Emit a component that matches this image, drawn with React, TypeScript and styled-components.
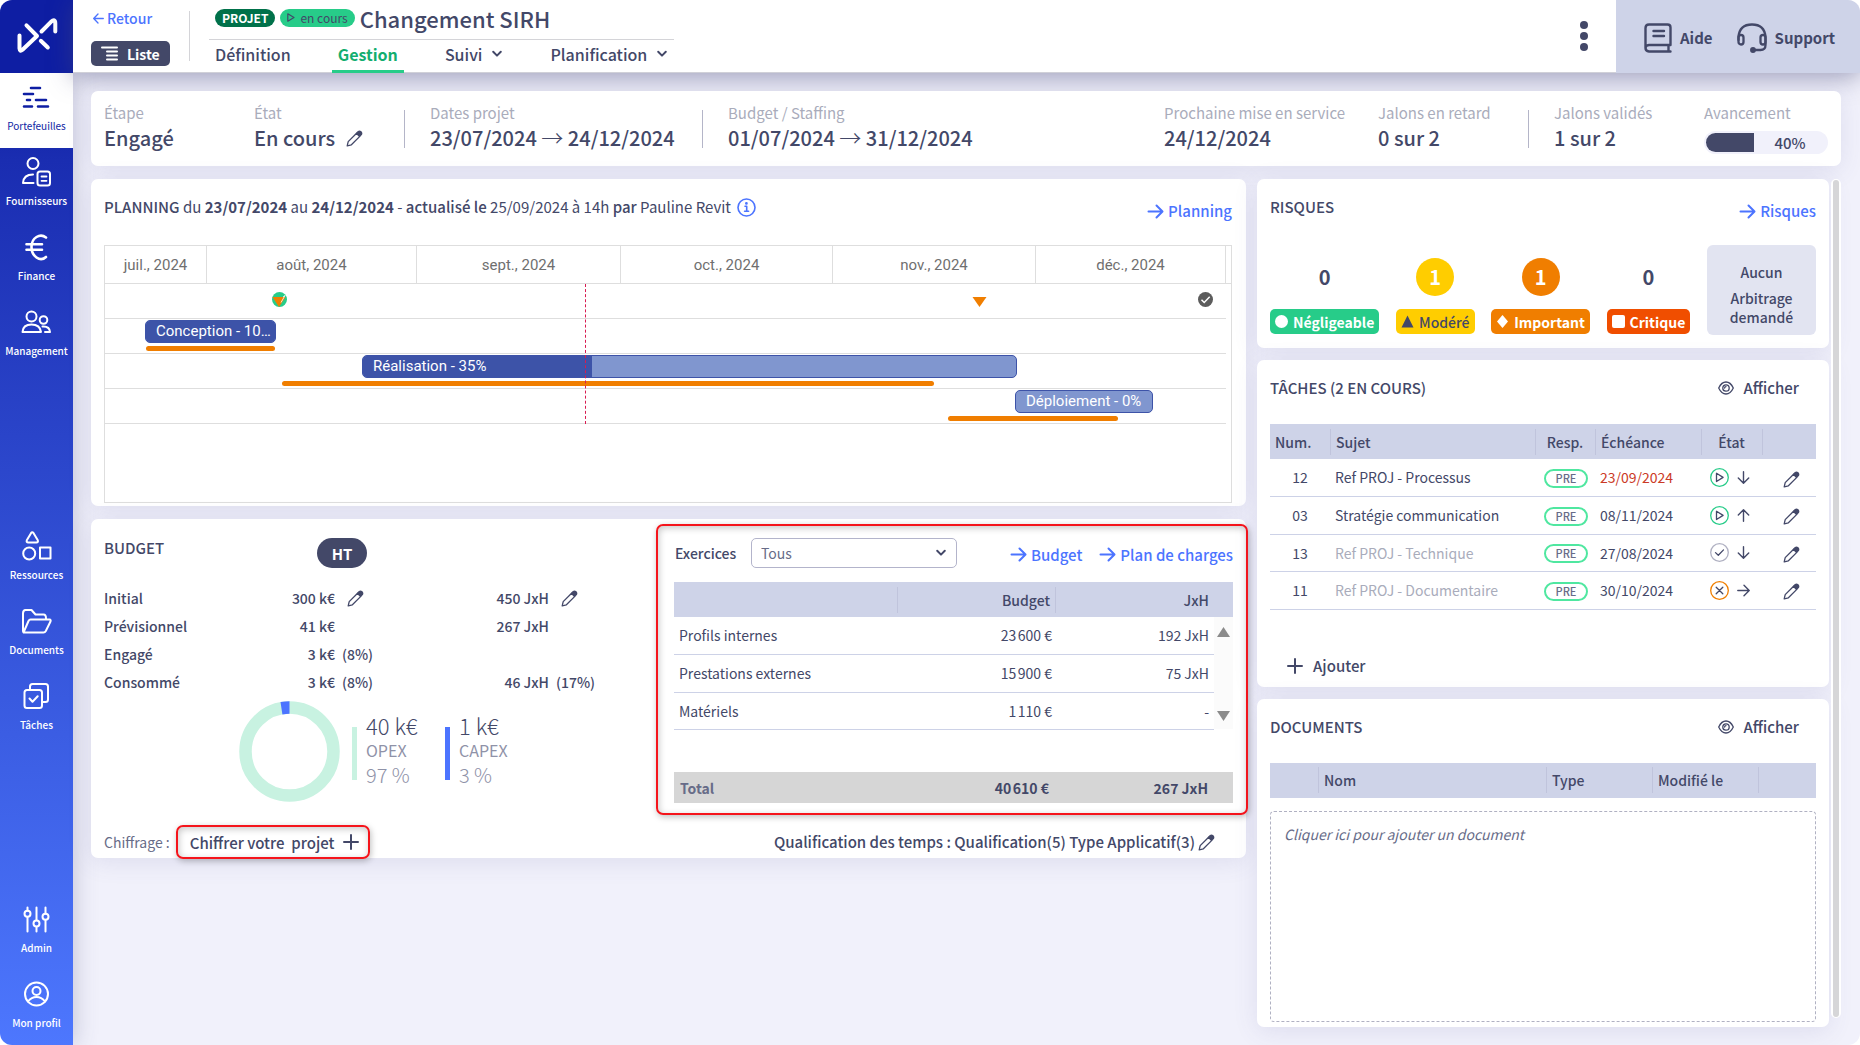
import React from "react";
import styled, { createGlobalStyle, css } from "styled-components";

const c = {
  ink: "#434868",
  soft: "#676c88",
  muted: "#a9acbb",
  blue: "#4c74ff",
  navy: "#0e1ea3",
  green: "#27cc89",
  line: "#cdd2e7",
  head: "#ced3e8",
  orange: "#f07e00",
};

const Global = createGlobalStyle`
  *, *::before, *::after { box-sizing: border-box; }
  body { margin: 0; background: #fff; }
  body, button, select, table { font-family: "Noto Sans CJK SC", "Open Sans", sans-serif; }
  button { border: 0; padding: 0; background: none; color: inherit; cursor: pointer; }
  a { text-decoration: none; color: inherit; }
  svg { display: block; flex: none; }
  h1, h2, p, dl, dd, dt, ul { margin: 0; padding: 0; }
`;

const Page = styled.div`
  display: flex;
  min-height: 100vh;
  border-radius: 12px;
  overflow: hidden;
  background: #f1f1fb;
  color: ${c.ink};
  font-size: 14px;
  line-height: 20px;
`;

/* ---------- sidebar ---------- */
const Sidebar = styled.nav`
  width: 73px;
  flex: none;
  display: flex;
  flex-direction: column;
  justify-content: space-between;
  background: linear-gradient(${c.navy} 0, ${c.navy} 73px, #1a2db1 160px, #4d77fe 100%);
  box-shadow: 0 0 24px rgba(70, 72, 120, 0.3);
`;
const LogoBox = styled.a`
  display: block;
  height: 73px;
`;
const NavItem = styled.a<{ $active?: boolean }>`
  height: 75px;
  display: flex;
  flex-direction: column;
  align-items: center;
  padding-top: 8px;
  gap: 4px;
  font-size: 10px;
  line-height: 16px;
  font-weight: 500;
  white-space: nowrap;
  color: #fff;
  ${(p) => p.$active && css`background: #fff; color: ${c.navy}; font-weight: 400;`}
`;

/* ---------- header ---------- */
const Main = styled.div`
  flex: 1;
  min-width: 0;
  display: flex;
  flex-direction: column;
`;
const Header = styled.header`
  height: 73px;
  display: flex;
  background: #fff;
  border-bottom: 1px solid #d0d0d8;
  box-shadow: 0 4px 24px rgba(70, 72, 120, 0.5);
`;
const BackCol = styled.div`
  width: 117px;
  padding: 8px 0 0 18px;
  display: flex;
  flex-direction: column;
  align-items: flex-start;
  gap: 13px;
`;
const Back = styled.a`
  display: flex;
  align-items: center;
  gap: 3px;
  color: ${c.blue};
  font-weight: 500;
  padding-left: 2px;
`;
const ListButton = styled.button`
  height: 25px;
  width: 79px;
  display: flex;
  align-items: center;
  gap: 8px;
  padding-left: 10px;
  border-radius: 5px;
  background: ${c.ink};
  color: #fff;
  font-size: 14px;
  font-weight: 700;
`;
const TitleCol = styled.div`
  padding-left: 20px;
  position: relative;
  margin-left: -1px;
  &::before {
    content: "";
    position: absolute;
    left: 0;
    top: 11px;
    height: 50px;
    border-left: 1px solid #d4d4d8;
  }
`;
const TitleRow = styled.div`
  height: 40px;
  display: flex;
  align-items: center;
  padding: 0 6px 4px;
  gap: 5px;
  border-bottom: 1px solid #d4d4d8;
`;
const Pill = styled.span<{ $dark?: boolean }>`
  height: 18px;
  display: flex;
  align-items: center;
  gap: 5px;
  padding: 0 7px;
  border-radius: 9px;
  font-size: 12px;
  line-height: 18px;
  background: ${(p) => (p.$dark ? "#00714a" : c.green)};
  color: ${(p) => (p.$dark ? "#fff" : c.ink)};
  font-weight: ${(p) => (p.$dark ? 700 : 400)};
`;
const Title = styled.h1`
  font-size: 22px;
  line-height: 34px;
  font-weight: 500;
`;
const Tabs = styled.div`
  display: flex;
  height: 33px;
  gap: 35px;
`;
const Tab = styled.a<{ $active?: boolean }>`
  display: flex;
  align-items: center;
  gap: 9px;
  padding: 0 6px 2px;
  font-size: 16px;
  font-weight: 500;
  border-bottom: 3px solid transparent;
  ${(p) => p.$active && css`color: #13ae6f; font-weight: 700; border-bottom-color: ${c.green};`}
`;
const MenuButton = styled.button`
  margin-left: auto;
  width: 64px;
  display: flex;
  justify-content: center;
  align-items: center;
`;
const HelpArea = styled.div`
  width: 244px;
  display: flex;
  align-items: center;
  gap: 24px;
  margin-bottom: -1px;
  padding: 3px 0 0 28px;
  background: ${c.head};
`;
const HelpLink = styled.a`
  display: flex;
  align-items: center;
  gap: 8px;
  font-size: 15px;
  font-weight: 700;
`;

/* ---------- content ---------- */
const Content = styled.main`
  flex: 1;
  padding: 18px 19px 18px 18px;
  display: flex;
  flex-direction: column;
  gap: 13px;
`;
const Card = styled.section`
  background: #fff;
  border-radius: 7px;
  box-shadow: 0 4px 24px rgba(80, 80, 150, 0.12);
`;
const InfoCard = styled(Card)`
  height: 75px;
  display: flex;
  padding: 12px 13px 0;
`;
const Info = styled.dl<{ $w: number }>`
  width: ${(p) => p.$w}px;
  white-space: nowrap;
  dt { font-size: 15px; line-height: 20px; color: ${c.muted}; }
  dd { font-size: 20px; line-height: 30px; font-weight: 500; display: flex; align-items: center; gap: 11px; }
`;
const Range = styled.span`
  i { font-style: normal; font-weight: 300; font-size: 22px; line-height: 20px; }
`;
const InfoRule = styled.div`
  width: 1px;
  height: 38px;
  margin: 7px 25px 0 0;
  background: #b4b5c8;
`;
const Grow = styled.div`
  flex: 1;
`;
const Progress = styled.div`
  width: 124px;
  flex: none;
  height: 23px;
  margin-top: 8px;
  padding: 2px;
  display: flex;
  align-items: center;
  border-radius: 12px;
  background: #f1f1fb;
  font-size: 15px;
  line-height: 19px;
  font-weight: 500;
`;
const ProgressFill = styled.div`
  height: 19px;
  border-radius: 10px 0 0 10px;
  background: ${c.ink};
`;
const ProgressText = styled.span`
  flex: 1;
  text-align: center;
`;
const Columns = styled.div`
  flex: 1;
  display: flex;
  align-items: stretch;
`;
const LeftCol = styled.div`
  flex: 1;
  min-width: 0;
  display: flex;
  flex-direction: column;
  gap: 13px;
  margin-right: 11px;
`;
const RightCol = styled.div`
  width: 33%;
  max-width: 572px;
  min-width: 560px;
  display: flex;
  flex-direction: column;
  gap: 12px;
`;
const ScrollTrack = styled.div`
  width: 10px;
  margin: 0 0 9px 2px;
  padding: 1px 2px;
  border-radius: 5px;
  background: #fff;
  &::before {
    content: "";
    display: block;
    height: 100%;
    border-radius: 3px;
    background: #d6d6d8;
  }
`;
const CardHead = styled.div<{ $tall?: boolean }>`
  display: flex;
  justify-content: space-between;
  align-items: flex-start;
  height: ${(p) => (p.$tall ? 24 : 20)}px;
  > a { align-self: flex-end; }
`;
const CardTitle = styled.h2`
  font-size: 15px;
  line-height: 20px;
  font-weight: 500;
`;
const ArrowAnchor = styled.a`
  display: flex;
  align-items: center;
  gap: 4px;
  color: ${c.blue};
  font-size: 15px;
  font-weight: 500;
`;

/* ---------- planning ---------- */
const PlanningCard = styled(Card)`
  padding: 18px 14px 3px 13px;
`;
const PlanningTitle = styled.p`
  display: flex;
  align-items: center;
  gap: 6px;
  font-size: 15px;
  b { font-weight: 700; }
  strong { font-weight: 500; }
`;
const Chart = styled.div`
  margin-top: 24px;
  border: 1px solid #dedede;
  font-family: Roboto, sans-serif;
  font-size: 15px;
  padding-bottom: 78px;
`;
const ChartHead = styled.div`
  height: 38px;
  padding-right: 5px;
  display: grid;
  grid-template-columns: 102fr 210fr 204fr 212fr 203fr 190fr;
  border-bottom: 1px solid #dedede;
`;
const Month = styled.div`
  display: flex;
  align-items: center;
  justify-content: center;
  color: #6f6f6f;
  border-right: 1px solid #dedede;
`;
const ChartBody = styled.div`
  position: relative;
  margin-right: 5px;
`;
const Lane = styled.div`
  height: 35px;
  position: relative;
  border-bottom: 1px solid #dedede;
`;
const Bar = styled.div`
  position: absolute;
  top: 1px;
  height: 23px;
  overflow: hidden;
  border: 1px solid #3d53a8;
  border-radius: 5px;
  background: #8096cf;
`;
const BarDone = styled.div`
  position: absolute;
  inset: 0 auto 0 0;
  background: #3d53a8;
`;
const BarLabel = styled.div`
  position: relative;
  padding-left: 10px;
  line-height: 21px;
  color: #fff;
  white-space: nowrap;
`;
const Baseline = styled.div`
  position: absolute;
  top: 27px;
  height: 5px;
  border-radius: 3px;
  background: ${c.orange};
`;
const Milestone = styled.div`
  position: absolute;
  top: 8px;
  margin-left: -8px;
`;
const Today = styled.div`
  position: absolute;
  top: 0;
  bottom: 0;
  border-left: 1px dashed #d81b50;
`;

/* ---------- budget ---------- */
const BudgetCard = styled(Card)`
  padding: 5px 13px 0;
`;
const BudgetTop = styled.div`
  display: flex;
`;
const BudgetLeft = styled.div`
  flex: 1;
  min-width: 0;
  padding-top: 14px;
`;
const BudgetHead = styled.div`
  display: flex;
  align-items: flex-start;
  height: 46px;
  h2 { width: 213px; }
`;
const HtButton = styled.button`
  width: 50px;
  height: 30px;
  border-radius: 15px;
  background: ${c.ink};
  color: #fff;
  font-size: 15px;
  font-weight: 700;
`;
const Figures = styled.table`
  border-collapse: collapse;
  table-layout: fixed;
  font-size: 14px;
  line-height: 20px;
  font-weight: 500;
  th { text-align: left; font-weight: 500; padding: 0; width: 140px; }
  tr { height: 28px; }
  td { padding: 0; }
`;
const Num = styled.td<{ $w: number }>`
  width: ${(p) => p.$w}px;
  text-align: right;
`;
const Side = styled.td`
  width: 70px;
  && { padding-left: 7px; }
  button { display: block; margin-left: 5px; }
`;
const Split = styled.div`
  display: flex;
  align-items: flex-start;
  margin: 5px 0 0 135px;
`;
const Legend = styled.div<{ $color: string }>`
  position: relative;
  width: 93px;
  padding: 9px 0 0 14px;
  font-size: 16px;
  line-height: 20px;
  color: #8f92a8;
  &::before {
    content: "";
    position: absolute;
    left: 0;
    top: 26px;
    width: 5px;
    height: 53px;
    background: ${(p) => p.$color};
  }
  strong { display: block; font-size: 22px; line-height: 30px; font-weight: 300; color: ${c.ink}; }
  span { display: block; }
  em { display: block; font-style: normal; font-size: 20px; line-height: 30px; font-weight: 300; }
`;
const redFrame = css`
  border: 2px solid #f5141b;
  border-radius: 7px;
  box-shadow: 1px 2px 6px rgba(0, 0, 0, 0.25), inset 1px 2px 7px rgba(0, 0, 0, 0.22);
`;
const Exercises = styled.div`
  ${redFrame}
  width: 592px;
  margin-right: -15px;
  padding: 12px 13px 10px 16px;
`;
const ExercisesHead = styled.div`
  display: flex;
  align-items: center;
  height: 30px;
  margin-bottom: 14px;
  font-weight: 500;
  label { width: 77px; padding-left: 1px; }
`;
const SelectWrap = styled.div`
  width: 206px;
  margin-right: auto;
  display: grid;
  align-items: center;
  svg, select { grid-area: 1 / 1; }
  svg { justify-self: end; margin-right: 10px; pointer-events: none; }
`;
const Select = styled.select`
  height: 30px;
  width: 100%;
  appearance: none;
  padding: 0 9px;
  border: 1px solid #b3b4cb;
  border-radius: 5px;
  background: #fff;
  color: ${c.soft};
  font-size: 14px;
`;
const Links = styled.div`
  display: flex;
  gap: 17px;
  padding-top: 3px;
`;
const headCell = css`
  height: 35px;
  background: ${c.head};
  font-weight: 500;
  font-size: 14px;
  text-align: left;
`;
const ruled = css`
  background-image: linear-gradient(#c0c4dc, #c0c4dc);
  background-size: 1px 26px;
  background-repeat: no-repeat;
  background-position: left center;
`;
const DataTable = styled.table`
  width: 100%;
  border-collapse: collapse;
  table-layout: fixed;
  font-size: 14px;
  line-height: 20px;
`;
const Th = styled.th<{ $w?: number; $align?: string; $rule?: boolean; $pad?: string }>`
  ${headCell}
  width: ${(p) => (p.$w ? `${p.$w}px` : "auto")};
  padding: ${(p) => p.$pad || "0 5px"};
  && { text-align: ${(p) => p.$align || "left"}; }
  ${(p) => p.$rule && ruled}
`;
const Td = styled.td<{ $align?: string; $pad?: string; $tone?: string }>`
  height: 37px;
  tr:nth-child(even) > & { height: 38px; }
  padding: ${(p) => p.$pad || "0 5px"};
  text-align: ${(p) => p.$align || "left"};
  color: ${(p) => p.$tone || "inherit"};
  border-bottom: 1px solid ${c.line};
  white-space: nowrap;
`;
const Gutter = styled.td`
  padding: 10px 0 8px;
  background: #fbfbfb;
`;
const GutterInner = styled.div`
  height: 94px;
  display: flex;
  flex-direction: column;
  justify-content: space-between;
  align-items: center;
`;
const Spacer = styled.td`
  height: 43px;
  padding: 0;
`;
const TotalCell = styled.td<{ $align?: string; $soft?: boolean }>`
  height: 31px;
  padding: 0 6px;
  background: #d6d6d6;
  font-weight: 700;
  text-align: ${(p) => p.$align || "left"};
  color: ${(p) => (p.$soft ? c.soft : c.ink)};
`;
const BudgetFoot = styled.div`
  display: flex;
  align-items: center;
  margin: 10px 0 -1px;
  color: ${c.soft};
`;
const EstimateButton = styled.button`
  ${redFrame}
  height: 34px;
  margin-left: 6px;
  padding: 0 9px 0 12px;
  display: flex;
  align-items: center;
  gap: 8px;
  font-size: 15px;
  font-weight: 500;
  color: ${c.ink};
  white-space: pre;
`;
const Qualif = styled.div`
  margin: 0 18px 0 auto;
  display: flex;
  align-items: center;
  gap: 3px;
  font-size: 15px;
  font-weight: 500;
  color: ${c.ink};
`;

/* ---------- right column ---------- */
const SideCard = styled(Card)`
  padding: 18px 13px 13px;
`;
const RiskRow = styled.div`
  display: flex;
  align-items: flex-end;
  justify-content: space-between;
  margin-top: 24px;
`;
const Risk = styled.div`
  display: flex;
  flex-direction: column;
  align-items: center;
  gap: 13px;
  padding-bottom: 1px;
`;
const RiskCount = styled.div<{ $bg?: string }>`
  width: 38px;
  height: 38px;
  border-radius: 50%;
  background: ${(p) => p.$bg || "none"};
  color: ${(p) => (p.$bg ? "#fff" : "inherit")};
  display: grid;
  place-items: center;
  font-size: 20px;
  font-weight: 700;
`;
const RiskTag = styled.div<{ $bg: string; $dark?: boolean }>`
  height: 25px;
  padding: 0 5px;
  display: flex;
  align-items: center;
  gap: 5px;
  border-radius: 5px;
  background: ${(p) => p.$bg};
  color: ${(p) => (p.$dark ? c.ink : "#fff")};
  font-size: 14px;
  font-weight: ${(p) => (p.$dark ? 500 : 700)};
`;
const Arbitrage = styled.div`
  width: 109px;
  height: 90px;
  border-radius: 6px;
  background: #e2e4f1;
  padding-top: 18px;
  text-align: center;
  font-weight: 500;
  line-height: 19px;
  p + p { margin-top: 7px; }
`;
const ShowButton = styled.button`
  display: flex;
  align-items: center;
  gap: 10px;
  margin-right: 17px;
  font-size: 15px;
  line-height: 20px;
  font-weight: 500;
`;
const TableWrap = styled.div`
  margin-top: 26px;
`;
const Resp = styled.span`
  display: inline-block;
  width: 44px;
  height: 19px;
  border: 2px solid #4fe7a0;
  border-radius: 10px;
  font-size: 11px;
  line-height: 15px;
  font-weight: 500;
  text-align: center;
  vertical-align: middle;
  color: ${c.soft};
`;
const StateCell = styled.span`
  display: flex;
  align-items: center;
  gap: 8px;
`;
const AddButton = styled.button`
  display: flex;
  align-items: center;
  gap: 10px;
  margin: 46px 0 0 17px;
  font-size: 15px;
  line-height: 20px;
  font-weight: 500;
`;
const TasksCard = styled(SideCard)`
  padding-bottom: 11px;
`;
const DocsCard = styled(SideCard)`
  flex: 1;
  display: flex;
  flex-direction: column;
  padding-bottom: 5px;
`;
const DropZone = styled.button`
  flex: 1;
  min-height: 160px;
  margin-top: 13px;
  padding: 12px 13px;
  display: flex;
  align-items: flex-start;
  border: 1px dashed #b0b1c2;
  border-radius: 4px;
  font-size: 14px;
  line-height: 20px;
  font-style: italic;
  color: ${c.soft};
`;
const IconButton = styled.button`
  display: inline-block;
  vertical-align: middle;
`;

/* ---------- icons ---------- */
const stroke = {
  fill: "none",
  stroke: "currentColor",
  strokeLinecap: "round" as const,
  strokeLinejoin: "round" as const,
};
const Pencil = () => (
  <svg width="17" height="17" viewBox="0 0 17 17" {...stroke} strokeWidth="1.3">
    <path d="M1.2 15.8 2.2 11.6 10.6 3.2l3.2 3.2-8.4 8.4z" />
    <path d="M10.4 3.4 12.3 1.5q1.3-1 2.6.3t.5 2.7l-1.9 1.9z" fill="currentColor" />
  </svg>
);
const ArrowRight = () => (
  <svg width="17" height="17" viewBox="0 0 17 17" {...stroke} strokeWidth="2">
    <path d="M1.5 8.5H15M9.5 2.5l6 6-6 6" />
  </svg>
);
const StateArrow = ({ dir }: { dir: string }) => {
  const turn: Record<string, number> = { right: 0, down: 90, up: 270 };
  return (
    <svg width="13" height="13" viewBox="0 0 13 13" {...stroke} strokeWidth="1.4">
      <g transform={`rotate(${turn[dir]} 6.5 6.5)`}>
        <path d="M.8 6.5h11.2M7 1.3l5.2 5.2L7 11.7" />
      </g>
    </svg>
  );
};
const StateIcon = ({ kind }: { kind: string }) => {
  const ring: Record<string, string> = { play: c.green, done: "#b0b1c2", off: c.orange };
  return (
    <svg width="19" height="19" viewBox="0 0 19 19" {...stroke} strokeWidth="1.3">
      <circle cx="9.5" cy="9.5" r="8.8" stroke={ring[kind]} />
      {kind === "play" && <path d="M6.5 5.3v8.2l6.6-4.1z" />}
      {kind === "done" && <path d="m5.5 9.6 2.8 2.7 5.2-5.4" />}
      {kind === "off" && <path d="m6.2 6.2 6.6 6.6M12.8 6.2l-6.6 6.6" />}
    </svg>
  );
};
const Chevron = () => (
  <svg width="12" height="8" viewBox="0 0 12 8" {...stroke} strokeWidth="2">
    <path d="m2.2 1.8 3.8 3.8 3.8-3.8" />
  </svg>
);
const Eye = () => (
  <svg width="16" height="14" viewBox="0 0 16 14" {...stroke} strokeWidth="1.3">
    <path d="M.7 7Q3.5 1 8 1t7.300 6Q12.500 13 8 13T.7 7z" />
    <circle cx="8" cy="7" r="3.2" />
    <path d="M8 5.600Q6.600 5.700 6.600 7" />
  </svg>
);
const Plus = () => (
  <svg width="16" height="16" viewBox="0 0 16 16" {...stroke} strokeWidth="2">
    <path d="M8 1v14M1 8h14" />
  </svg>
);
const InfoIcon = () => (
  <svg width="19" height="19" viewBox="0 0 19 19" {...stroke} stroke={c.blue} strokeWidth="1.6">
    <circle cx="9.5" cy="9.5" r="8.5" />
    <path d="M8 8.3h1.700v5M7.600 13.300h4" />
    <circle cx="9.4" cy="5.4" r=".6" fill={c.blue} />
  </svg>
);
const Tri = ({ up }: { up?: boolean }) => (
  <svg width="13" height="10" viewBox="0 0 13 10">
    <path d={up ? "M6.500 0 13 10H0z" : "M0 0h13L6.500 10z"} fill="#8b8b8b" />
  </svg>
);

const Logo = () => (
  <svg width="73" height="73" viewBox="0 0 73 73" {...stroke} stroke="#fff" strokeWidth="4">
    <path d="M19.500 35.500v13q.2 3.700 3 1.300L37 36 26.500 25.300" />
    <path d="M41.500 31.500 51 21.800q4.300-3.600 4.300 1.700v8" />
    <path d="m40.800 40.800 7 6.700" />
  </svg>
);

const navIcons: Record<string, React.ReactNode> = {
  Portefeuilles: <path d="M12 7h9M5 13h9M8 19h3M17 19h10M5 25.500h8M19 25.500h10" strokeWidth="2.600" />,
  Fournisseurs: (
    <>
      <circle cx="14" cy="7.500" r="5.500" />
      <path d="M14 18.500q-9.500 0-10 8.500h10.500" />
      <rect x="18.500" y="15.500" width="12.500" height="14" rx="2.500" />
      <path d="M22.500 20.500h5M22.500 24.800h5" strokeWidth="1.800" />
    </>
  ),
  Finance: <path d="M27 6.500Q22.500 3 17.500 6T12.500 16t5 10.500 9.500-.5M7.500 13.200H23M7.500 18.800H23" strokeWidth="2.600" />,
  Management: (
    <>
      <circle cx="12.500" cy="10.500" r="5" />
      <path d="M3.500 26q.5-7.500 9-7.500t9.500 7.500z" />
      <circle cx="24.500" cy="14" r="3.800" />
      <path d="M23.500 20.500q7-.5 7.500 5.500h-5" />
    </>
  ),
  Ressources: (
    <>
      <path d="M12 3.200q1.200-1.700 2.600 0l4.200 7q.7 2.200-1.500 2.300H9.300q-2.200-.1-1.500-2.300z" />
      <circle cx="10.200" cy="23.500" r="6" />
      <path d="M21 17.500h10.500v11H21z" />
    </>
  ),
  Documents: (
    <path d="M4 26V8.500Q4 5 6.500 5h6l4 4.500h8q2.500 0 2.500 4M4.500 27.500l5-11.500q.8-1.500 2-1.500h19q1.700.2 1 2L26.800 26q-.8 1.500-2.300 1.500H6Q4 27.500 4 26" />
  ),
  "Tâches": (
    <>
      <rect x="5.500" y="10" width="17.500" height="18" rx="2.500" />
      <path d="M11 9.500V6.500Q11 4 13.500 4h13Q29 4 29 6.500v13q0 2.500-2.500 2.500h-3M10.500 18.500l3 3.200 5.200-5.400" />
    </>
  ),
  Admin: (
    <>
      <path d="M8.500 4.500v3M8.500 14v14.500M17.500 4.500v12.500M17.500 24v4.500M26.500 4.500v6M26.500 17v11.500" />
      <circle cx="8.500" cy="10.700" r="3" />
      <circle cx="17.500" cy="20.500" r="3" />
      <circle cx="26.500" cy="13.700" r="3" />
    </>
  ),
  "Mon profil": (
    <>
      <circle cx="17.500" cy="16" r="11.500" />
      <circle cx="17.500" cy="13" r="4" />
      <path d="M9 23.500q3.500-4.500 8.500-4.500t8.500 4.500" />
    </>
  ),
};
const NavEntry = ({ name, active }: { name: string; active?: boolean }) => (
  <NavItem href="#" $active={active}>
    <svg width="35" height="33" viewBox="0 0 35 33" {...stroke} strokeWidth="2">
      {navIcons[name]}
    </svg>
    {name}
  </NavItem>
);

/* ---------- data ---------- */
const SPAN = 1121;
const pct = (n: number) => `${(n / SPAN) * 100}%`;
const months = ["juil., 2024", "août, 2024", "sept., 2024", "oct., 2024", "nov., 2024", "déc., 2024"];
const phases = [
  { label: "Conception - 10…", from: 40, to: 171, done: 100, base: [41, 170] },
  { label: "Réalisation - 35%", from: 257, to: 912, done: 35, base: [177, 829] },
  { label: "Déploiement - 0%", from: 910, to: 1048, done: 0, base: [843, 1013] },
];
const tasks = [
  { n: "12", s: "Ref PROJ - Processus", d: "23/09/2024", late: true, k: "play", a: "down" },
  { n: "03", s: "Stratégie communication", d: "08/11/2024", k: "play", a: "up" },
  { n: "13", s: "Ref PROJ - Technique", d: "27/08/2024", k: "done", a: "down", off: true },
  { n: "11", s: "Ref PROJ - Documentaire", d: "30/10/2024", k: "off", a: "right", off: true },
];
const exercises = [
  ["Profils internes", "23\u202f600 €", "192 JxH"],
  ["Prestations externes", "15\u202f900 €", "75 JxH"],
  ["Matériels", "1\u202f110 €", "-"],
];
const risks = [
  { name: "Négligeable", n: 0, bg: c.green, shape: <circle cx="6.500" cy="6.500" r="6.500" /> },
  { name: "Modéré", n: 1, bg: "#ffcd00", dark: true, shape: <path d="M6.500 .5 12.500 12.500H.5z" /> },
  { name: "Important", n: 1, bg: c.orange, shape: <path d="M6.500 0 12 6.500 6.500 13 1 6.500z" /> },
  { name: "Critique", n: 0, bg: "#f04e00", shape: <rect width="13" height="13" rx="2" /> },
];

export default function App() {
  return (
    <>
      <Global />
      <Page>
        <Sidebar>
          <div>
            <LogoBox href="#" aria-label="Accueil"><Logo /></LogoBox>
            <NavEntry name="Portefeuilles" active />
            <NavEntry name="Fournisseurs" />
            <NavEntry name="Finance" />
            <NavEntry name="Management" />
          </div>
          <div>
            <NavEntry name="Ressources" />
            <NavEntry name="Documents" />
            <NavEntry name="Tâches" />
          </div>
          <div>
            <NavEntry name="Admin" />
            <NavEntry name="Mon profil" />
          </div>
        </Sidebar>
        <Main>
          <Header>
            <BackCol>
              <Back href="#">
                <svg width="11" height="11" viewBox="0 0 11 11" {...stroke} strokeWidth="1.300">
                  <path d="M10.300 5.500H.8M5 1 .7 5.500 5 10" />
                </svg>
                Retour
              </Back>
              <ListButton>
                <svg width="18" height="15" viewBox="0 0 18 15" {...stroke} strokeWidth="2">
                  <path d="M1 1.500h15M6 5.500h10M6 9.500h10M6 13.500h10" />
                </svg>
                Liste
              </ListButton>
            </BackCol>
            <TitleCol>
              <TitleRow>
                <Pill $dark>PROJET</Pill>
                <Pill>
                  <svg width="8" height="9" viewBox="0 0 8 9" {...stroke} strokeWidth="1.200">
                    <path d="M.8.8v7.400l6.200-3.700z" />
                  </svg>
                  en cours
                </Pill>
                <Title>Changement SIRH</Title>
              </TitleRow>
              <Tabs>
                <Tab href="#">Définition</Tab>
                <Tab href="#" $active>Gestion</Tab>
                <Tab href="#">Suivi <Chevron /></Tab>
                <Tab href="#">Planification <Chevron /></Tab>
              </Tabs>
            </TitleCol>
            <MenuButton aria-label="Menu">
              <svg width="8" height="30" viewBox="0 0 8 30" fill="currentColor">
                <circle cx="4" cy="4" r="4" /><circle cx="4" cy="15" r="4" /><circle cx="4" cy="26" r="4" />
              </svg>
            </MenuButton>
            <HelpArea>
              <HelpLink href="#">
                <svg width="28" height="30" viewBox="0 0 28 30" {...stroke} strokeWidth="2.400">
                  <path d="M26.500 28.500H5q-3.500-.3-3.500-3.500V5Q1.500 1.500 5 1.500h18.500q3 0 3 3V22H5q-3.500.3-3.500 3M24.500 22.500v6" />
                  <path d="M9.500 8h10.500M9.500 13h10.500" />
                </svg>
                Aide
              </HelpLink>
              <HelpLink href="#">
                <svg width="30" height="30" viewBox="0 0 30 30" {...stroke} strokeWidth="2.300">
                  <path d="M1.500 17v-3Q2.500 1.500 15 1.500T28.500 14v8q0 5-5 5h-5" />
                  <rect x="1.500" y="12" width="5" height="9.500" rx="2.500" />
                  <rect x="23.500" y="12" width="5" height="9.500" rx="2.500" />
                  <circle cx="16" cy="27" r="1.800" fill="currentColor" />
                </svg>
                Support
              </HelpLink>
            </HelpArea>
          </Header>

          <Content>
            <InfoCard>
              <Info $w={150}><dt>Étape</dt><dd>Engagé</dd></Info>
              <Info $w={150}>
                <dt>État</dt>
                <dd>En cours <IconButton aria-label="Modifier l'état"><Pencil /></IconButton></dd>
              </Info>
              <InfoRule />
              <Info $w={272}><dt>Dates projet</dt><dd><Range>23/07/2024 <i>→</i> 24/12/2024</Range></dd></Info>
              <InfoRule />
              <Info $w={272}><dt>Budget / Staffing</dt><dd><Range>01/07/2024 <i>→</i> 31/12/2024</Range></dd></Info>
              <Grow />
              <Info $w={214}><dt>Prochaine mise en service</dt><dd>24/12/2024</dd></Info>
              <Info $w={150}><dt>Jalons en retard</dt><dd>0 sur 2</dd></Info>
              <InfoRule />
              <Info $w={150}><dt>Jalons validés</dt><dd>1 sur 2</dd></Info>
              <Info $w={124}>
                <dt>Avancement</dt>
                <dd>
                  <Progress>
                    <ProgressFill style={{ width: "40%" }} />
                    <ProgressText>40%</ProgressText>
                  </Progress>
                </dd>
              </Info>
            </InfoCard>

            <Columns>
              <LeftCol>
                <PlanningCard>
                  <CardHead $tall>
                    <PlanningTitle>
                      <span>
                        <strong>PLANNING</strong> du <b>23/07/2024</b> au <b>24/12/2024</b> - <strong>actualisé le</strong>{" "}
                        25/09/2024 à 14h <strong>par</strong> Pauline Revit
                      </span>
                      <InfoIcon />
                    </PlanningTitle>
                    <ArrowAnchor href="#"><ArrowRight /> Planning</ArrowAnchor>
                  </CardHead>
                  <Chart>
                    <ChartHead>
                      {months.map((m) => <Month key={m}>{m}</Month>)}
                    </ChartHead>
                    <ChartBody>
                      <Lane>
                        <Milestone style={{ left: pct(175) }}>
                          <svg width="15" height="15" viewBox="0 0 15 15">
                            <circle cx="7.500" cy="7.500" r="7.500" fill={c.green} />
                            <path d="M.5 5h13l-6.500 10z" fill={c.orange} />
                            <path d="m11 5 2-1.500-4 7" stroke="#fff" strokeWidth=".8" fill="none" />
                          </svg>
                        </Milestone>
                        <Milestone style={{ left: pct(875) }}>
                          <svg width="15" height="15" viewBox="0 0 15 15">
                            <path d="M.5 5h14l-7 10z" fill={c.orange} />
                          </svg>
                        </Milestone>
                        <Milestone style={{ left: pct(1101) }}>
                          <svg width="15" height="15" viewBox="0 0 15 15">
                            <circle cx="7.500" cy="7.500" r="7.500" fill="#5c5c5c" />
                            <path d="m3.500 7.800 2.700 2.700 5.500-5.700" stroke="#fff" strokeWidth="1.500" fill="none" />
                          </svg>
                        </Milestone>
                      </Lane>
                      {phases.map((p) => (
                        <Lane key={p.label}>
                          <Bar style={{ left: pct(p.from), width: pct(p.to - p.from) }}>
                            <BarDone style={{ width: `${p.done}%` }} />
                            <BarLabel>{p.label}</BarLabel>
                          </Bar>
                          <Baseline style={{ left: pct(p.base[0]), width: pct(p.base[1] - p.base[0]) }} />
                        </Lane>
                      ))}
                      <Today style={{ left: pct(480) }} />
                    </ChartBody>
                  </Chart>
                </PlanningCard>

                <BudgetCard>
                  <BudgetTop>
                    <BudgetLeft>
                      <BudgetHead>
                        <CardTitle>BUDGET</CardTitle>
                        <HtButton>HT</HtButton>
                      </BudgetHead>
                      <Figures>
                        <tbody>
                          <tr>
                            <th scope="row">Initial</th>
                            <Num $w={91}>300 k€</Num>
                            <Side><button aria-label="Modifier le budget initial"><Pencil /></button></Side>
                            <Num $w={144}>450 JxH</Num>
                            <Side><button aria-label="Modifier la charge initiale"><Pencil /></button></Side>
                          </tr>
                          <tr>
                            <th scope="row">Prévisionnel</th>
                            <Num $w={91}>41 k€</Num><Side />
                            <Num $w={144}>267 JxH</Num><Side />
                          </tr>
                          <tr>
                            <th scope="row">Engagé</th>
                            <Num $w={91}>3 k€</Num><Side>(8%)</Side>
                            <Num $w={144} /><Side />
                          </tr>
                          <tr>
                            <th scope="row">Consommé</th>
                            <Num $w={91}>3 k€</Num><Side>(8%)</Side>
                            <Num $w={144}>46 JxH</Num><Side>(17%)</Side>
                          </tr>
                        </tbody>
                      </Figures>
                      <Split>
                        <svg width="113" height="101" viewBox="0 0 113 101" fill="none">
                          <circle cx="50.500" cy="50.500" r="44" stroke="#c8f2e1" strokeWidth="12.500" />
                          <path d="M41.500 1.100Q46 .2 50.500 .2V12.800Q47 12.800 43.400 13.400z" fill={c.blue} />
                        </svg>
                        <Legend $color="#c8f2e1"><strong>40 k€</strong><span>OPEX</span><em>97 %</em></Legend>
                        <Legend $color={c.blue}><strong>1 k€</strong><span>CAPEX</span><em>3 %</em></Legend>
                      </Split>
                    </BudgetLeft>

                    <Exercises>
                      <ExercisesHead>
                        <label htmlFor="exercice">Exercices</label>
                        <SelectWrap>
                          <Select id="exercice" defaultValue="Tous"><option>Tous</option></Select>
                          <Chevron />
                        </SelectWrap>
                        <Links>
                          <ArrowAnchor href="#"><ArrowRight /> Budget</ArrowAnchor>
                          <ArrowAnchor href="#"><ArrowRight /> Plan de charges</ArrowAnchor>
                        </Links>
                      </ExercisesHead>
                      <DataTable>
                        <thead>
                          <tr>
                            <Th />
                            <Th $w={158} $align="right" $rule>Budget</Th>
                            <Th $w={159} $align="right" $rule>JxH</Th>
                            <Th $w={19} $pad="0" />
                          </tr>
                        </thead>
                        <tbody>
                          {exercises.map(([n, b, j], i) => (
                            <tr key={n}>
                              <Td>{n}</Td>
                              <Td $align="right" $pad="0 3px">{b}</Td>
                              <Td $align="right">{j}</Td>
                              {i === 0 && (
                                <Gutter rowSpan={3}>
                                  <GutterInner><Tri up /><Tri /></GutterInner>
                                </Gutter>
                              )}
                            </tr>
                          ))}
                        </tbody>
                        <tfoot>
                          <tr><Spacer colSpan={4} /></tr>
                          <tr>
                            <TotalCell $soft>Total</TotalCell>
                            <TotalCell $align="right">{"40\u202f610 €"}</TotalCell>
                            <TotalCell $align="right">267 JxH</TotalCell>
                            <TotalCell />
                          </tr>
                        </tfoot>
                      </DataTable>
                    </Exercises>
                  </BudgetTop>
                  <BudgetFoot>
                    Chiffrage :
                    <EstimateButton>{"Chiffrer votre  projet"}<Plus /></EstimateButton>
                    <Qualif>
                      Qualification des temps : Qualification(5) Type Applicatif(3)
                      <IconButton aria-label="Modifier la qualification"><Pencil /></IconButton>
                    </Qualif>
                  </BudgetFoot>
                </BudgetCard>
              </LeftCol>

              <RightCol>
                <SideCard>
                  <CardHead $tall>
                    <CardTitle>RISQUES</CardTitle>
                    <ArrowAnchor href="#"><ArrowRight /> Risques</ArrowAnchor>
                  </CardHead>
                  <RiskRow>
                    {risks.map((r) => (
                      <Risk key={r.name}>
                        <RiskCount $bg={r.n ? r.bg : undefined}>{r.n}</RiskCount>
                        <RiskTag $bg={r.bg} $dark={r.dark}>
                          <svg width="13" height="13" viewBox="0 0 13 13" fill="currentColor">{r.shape}</svg>
                          {r.name}
                        </RiskTag>
                      </Risk>
                    ))}
                    <Arbitrage><p>Aucun</p><p>Arbitrage demandé</p></Arbitrage>
                  </RiskRow>
                </SideCard>

                <TasksCard>
                  <CardHead>
                    <CardTitle>TÂCHES (2 EN COURS)</CardTitle>
                    <ShowButton><Eye />Afficher</ShowButton>
                  </CardHead>
                  <TableWrap>
                    <DataTable>
                      <thead>
                        <tr>
                          <Th $w={60}>Num.</Th>
                          <Th $rule $pad="0 6px">Sujet</Th>
                          <Th $w={60} $rule $align="center">Resp.</Th>
                          <Th $w={106} $rule $pad="0 6px">Échéance</Th>
                          <Th $w={61} $rule $align="center">État</Th>
                          <Th $w={54} $rule />
                        </tr>
                      </thead>
                      <tbody>
                        {tasks.map((t) => (
                          <tr key={t.n}>
                            <Td $align="center">{t.n}</Td>
                            <Td $tone={t.off ? c.muted : undefined}>{t.s}</Td>
                            <Td $align="center" $pad="0 0 0 2px"><Resp>PRE</Resp></Td>
                            <Td $tone={t.late ? "#cb3a26" : undefined}>{t.d}</Td>
                            <Td $pad="0 0 0 9px"><StateCell><StateIcon kind={t.k} /><StateArrow dir={t.a} /></StateCell></Td>
                            <Td $align="center" $pad="0 0 0 4px"><IconButton aria-label={`Modifier ${t.s}`}><Pencil /></IconButton></Td>
                          </tr>
                        ))}
                      </tbody>
                    </DataTable>
                  </TableWrap>
                  <AddButton><Plus />Ajouter</AddButton>
                </TasksCard>

                <DocsCard>
                  <CardHead>
                    <CardTitle>DOCUMENTS</CardTitle>
                    <ShowButton><Eye />Afficher</ShowButton>
                  </CardHead>
                  <TableWrap>
                    <DataTable>
                      <thead>
                        <tr>
                          <Th $w={48} />
                          <Th $rule $pad="0 6px">Nom</Th>
                          <Th $w={106} $rule $pad="0 6px">Type</Th>
                          <Th $w={106} $rule $pad="0 6px">Modifié le</Th>
                          <Th $w={58} $rule />
                        </tr>
                      </thead>
                    </DataTable>
                  </TableWrap>
                  <DropZone>Cliquer ici pour ajouter un document</DropZone>
                </DocsCard>
              </RightCol>
              <ScrollTrack />
            </Columns>
          </Content>
        </Main>
      </Page>
    </>
  );
}
